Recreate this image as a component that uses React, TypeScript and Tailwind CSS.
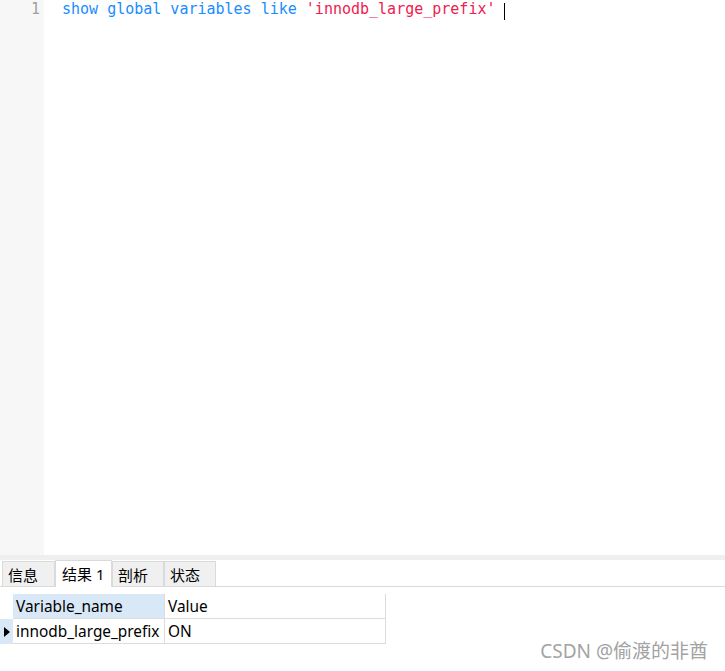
import React from 'react';

const ui = { fontFamily: '"Noto Sans", "Noto Sans CJK SC", sans-serif' };
const mono = { fontFamily: '"DejaVu Sans Mono", "Liberation Mono", monospace' };

const tabs = [
  { label: '信息', active: false, w: 'w-[53px]' },
  { label: '结果 1', active: true, w: 'w-[57px]' },
  { label: '剖析', active: false, w: 'w-[52px]' },
  { label: '状态', active: false, w: 'w-[52px]' },
];

export default function App() {
  return (
    <div className="relative flex h-[671px] w-[725px] flex-col overflow-hidden bg-white" style={ui}>
      {/* editor */}
      <div className="flex h-[555px]">
        <div className="w-[44px] bg-[#f7f7f7] pr-[4px] text-right text-[15px] leading-[18px] text-[#a0a0a0]" style={mono}>
          1
        </div>
        <div className="flex-1 -translate-y-[3px] pl-[18px] text-[15px] leading-[18px]" style={mono}>
          <span className="text-[#1a8cff]">show global variables like </span>
          <span className="text-[#f0204e]">'innodb_large_prefix'</span>
          <span className="ml-[8px] inline-block h-[17px] w-px translate-y-[6px] bg-black" />
        </div>
      </div>

      {/* splitter */}
      <div className="h-[5px] bg-[#efefef]" />

      {/* tabs */}
      <div className="flex h-[27px] items-end border-b border-[#dadada] pl-[2px]">
        {tabs.map((t) => (
          <div
            key={t.label}
            className={
              t.active
                ? `${t.w} -mb-px flex h-[27px] items-center border-x border-t border-[#dadada] bg-white pl-[6px] text-[15px] text-black`
                : `${t.w} flex h-[25px] items-center border-x border-t border-[#dadada] bg-[#f0f0f0] pl-[5px] pt-[2px] text-[15px] text-black`
            }
          >
            {t.label}
          </div>
        ))}
      </div>

      {/* result grid */}
      <div className="flex pt-[7px]">
        <div className="flex w-[13px] flex-col">
          <div className="h-[25px]" />
          <div className="flex h-[25px] items-center justify-center bg-[#d9e8f6]">
            <svg width="6" height="10" viewBox="0 0 6 10">
              <path d="M0 0 L6 5 L0 10 Z" fill="#000" />
            </svg>
          </div>
        </div>
        <div className="flex flex-col border-r border-[#dcdcdc] text-[15.4px] text-black">
          <div className="flex h-[25px] border-b border-[#dcdcdc]">
            <div className="flex w-[151px] items-center bg-[#d9e8f6] pl-[3px] pt-[2px]">Variable_name</div>
            <div className="flex w-[221px] items-center border-l border-[#dcdcdc] pl-[3px] pt-[2px]">Value</div>
          </div>
          <div className="flex h-[25px] border-b border-[#dcdcdc]">
            <div className="flex w-[151px] items-center pl-[3px] pt-[2px]">innodb_large_prefix</div>
            <div className="flex w-[221px] items-center border-l border-[#dcdcdc] pl-[3px] pt-[2px]">ON</div>
          </div>
        </div>
      </div>

      {/* watermark */}
      <div className="absolute bottom-[6px] right-[17px] text-[19px] text-[#a3a3a3]">CSDN @偷渡的非酋</div>
    </div>
  );
}
